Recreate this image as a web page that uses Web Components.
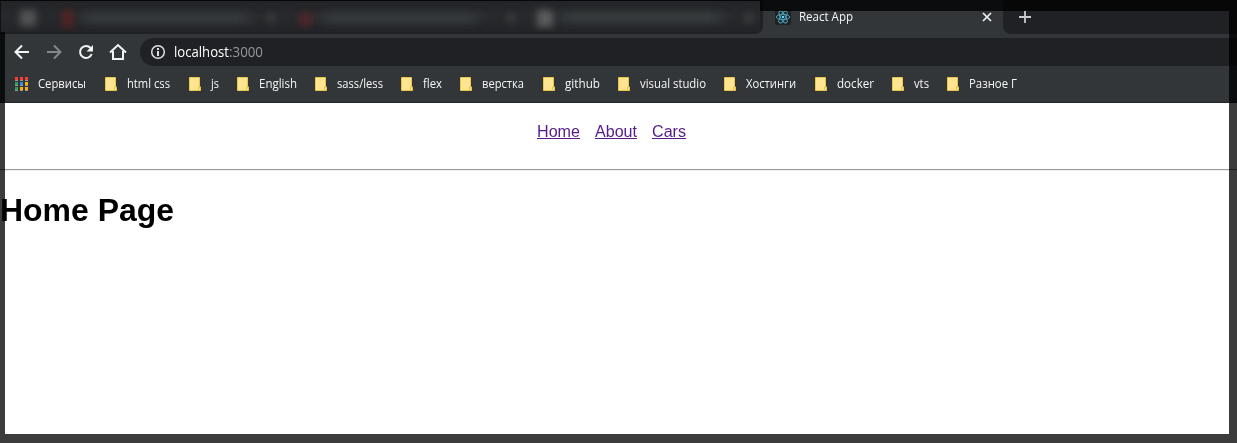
<!DOCTYPE html>
<html lang="ru"><head><meta charset="utf-8"><title>React App</title>
<style>html,body{margin:0;height:100%;overflow:hidden;background:#fff}</style></head><body>
<browser-window></browser-window>
<script>
class BaseEl extends HTMLElement{
  constructor(){super();this.attachShadow({mode:'open'});}
  draw(css,html){this.shadowRoot.innerHTML='<style>'+css+'</style>'+html;}
}
customElements.define('fit-text',class extends BaseEl{
  connectedCallback(){
    this.draw(':host{display:block;white-space:pre;flex:none;width:'+this.getAttribute('w')+'px}span{display:inline-block;transform-origin:0 50%}','<span><slot></slot></span>');
    const s=this.shadowRoot.querySelector('span');
    const w=s.getBoundingClientRect().width;
    s.style.transform='scaleX('+(+this.getAttribute('w')/w)+')';
  }
});
customElements.define('blurred-tabs',class extends BaseEl{
  connectedCallback(){
    this.draw(`:host{display:block;width:760px;height:31px;background:linear-gradient(#232427,#27292c 50%,#232427);overflow:hidden;border-left:1px solid #111;box-sizing:border-box}
    svg{display:block}`,
    `<svg width="759" height="31"><defs><filter id="b" x="-100%" y="-100%" width="300%" height="300%"><feGaussianBlur stdDeviation="3.5"/></filter><filter id="c" x="-50%" y="-200%" width="200%" height="500%"><feGaussianBlur stdDeviation="7 4.5"/></filter></defs>
    <g filter="url(#c)" fill="#3b4043"><rect x="82" y="13" width="166" height="8"/><rect x="322" y="13" width="155" height="8"/><rect x="560" y="12" width="160" height="9"/></g>
    <g filter="url(#b)"><rect x="19" y="9" width="16" height="16" fill="#515253"/><rect x="62" y="9" width="10" height="17" fill="#592420"/><rect x="298" y="12" width="14" height="12" fill="#4d272a"/><rect x="536" y="9" width="16" height="17" fill="#5a5b5c"/>
    <g fill="#3c3f41"><rect x="266" y="13" width="8" height="8"/><rect x="506" y="13" width="8" height="8"/><rect x="744" y="13" width="8" height="8"/></g></g></svg>`);
  }
});
customElements.define('tab-strip',class extends BaseEl{
  connectedCallback(){
    this.draw(`:host{display:flex;height:34px;background:#202124;color:#f5f6f7;font:12px/16px "Open Sans","Noto Sans",sans-serif}
    .before{width:763px;background:#202124;border-radius:0 0 8px 0}
    .wrap{background:#323639;display:flex;width:1003px}
    .tab{display:flex;flex:1;align-items:center;padding-left:12px}
    .tab svg{display:block}.tab fit-text{margin-left:8px}.close{margin-left:129px}
    .after{flex:1;background:#202124;border-radius:0 0 0 8px;padding:10px 0 0 15px}
    .under{flex:1;background:#323639;display:flex}`,
    `<div class="wrap"><div class="before"></div><div class="tab">
    <svg width="16" height="16"><rect width="16" height="16" rx="2" fill="#202124"/><g fill="none" stroke="#4fa9c0" stroke-width=".9"><ellipse cx="8" cy="8" rx="6.700" ry="2.600"/><ellipse cx="8" cy="8" rx="6.700" ry="2.600" transform="rotate(60 8 8)"/><ellipse cx="8" cy="8" rx="6.700" ry="2.600" transform="rotate(120 8 8)"/></g><circle cx="8" cy="8" r="1.300" fill="#61dafb"/></svg>
    <fit-text w="54">React App</fit-text><svg class="close" width="10" height="10"><path d="M1 1l8 8M9 1l-8 8" stroke="#f1f3f4" stroke-width="1.700"/></svg></div></div>
    <div class="under"><div class="after"><svg width="14" height="14"><path d="M7 1v12M1 7h12" stroke="#c8cacb" stroke-width="1.800"/></svg></div></div>`);
  }
});
customElements.define('tool-bar',class extends BaseEl{
  connectedCallback(){
    this.draw(`:host{display:flex;height:32px;padding-top:4px;box-sizing:border-box;background:#323639}
    .nav{display:flex;width:140px;box-sizing:border-box;padding-left:12px;gap:12px;align-items:center;height:28px}
    svg{display:block;flex:none}.addr{flex:1;height:28px;border-radius:14px 0 0 14px;background:#202124;display:flex;align-items:center;padding-left:10px;font:14px/20px "Open Sans","Noto Sans",sans-serif;color:#fff}
    .addr svg{margin-right:8px}.port{color:#92979c}`,
    `<div class="nav"><svg width="20" height="20" fill="none" stroke="#f1f3f4" stroke-width="2"><path d="M17 10H4M10 3.500L3.500 10l6.500 6.500"/></svg>
    <svg width="20" height="20" fill="none" stroke="#85888a" stroke-width="2"><path d="M3 10h13M10 3.500l6.500 6.500-6.500 6.500"/></svg>
    <svg width="20" height="20" fill="none" stroke="#f1f3f4" stroke-width="2"><path d="M14.600 6A6 6 0 1 0 15.700 12"/><path d="M17 3v6.500h-6.500z" fill="#f1f3f4" stroke="none"/></svg>
    <svg width="20" height="20" fill="none" stroke="#f1f3f4" stroke-width="2"><path d="M2 10.500L10 3l8 7.500M5 9v8h10V9"/></svg></div>
    <div class="addr"><svg width="16" height="16"><circle cx="8" cy="8" r="6.300" fill="none" stroke="#e0e1e2" stroke-width="1.500"/><path d="M8 7v5M8 4v2" stroke="#f1f3f4" stroke-width="1.800"/></svg><fit-text w="55">localhost</fit-text><fit-text class="port" w="34">:3000</fit-text></div>`);
  }
});
customElements.define('bookmark-item',class extends BaseEl{
  connectedCallback(){
    this.draw(`:host{display:flex;align-items:center;flex:none;width:${this.getAttribute('span')}px}svg{display:block;margin-right:10px}`,
    `<svg width="12" height="14"><path d="M.500.500h10V10h1v3.500H.500z" fill="#ffe592" stroke="#e9c447"/><path d="M9.500 13v-3h2" fill="none" stroke="#e9c447"/></svg><fit-text w="${this.getAttribute('w')}">${this.textContent}</fit-text>`);
  }
});
customElements.define('bookmark-bar',class extends BaseEl{
  connectedCallback(){
    const items=[['html css',43,84],['js',8,48],['English',38,78],['sass/less',46,86],['flex',19,59],['верстка',42,83],['github',35,75],['visual studio',66,106],['Хостинги',50,91],['docker',37,77],['vts',15,55],['Разное Г',48,80]];
    const cols=['#fb3a3a','#fb3a3a','#fb3a3a','#2fa055','#2a8cff','#fbb005','#2fa055','#fbb005','#fbb005'];
    this.draw(`:host{display:flex;height:37px;box-sizing:border-box;padding:0 0 1px 15px;background:#323639;border-bottom:1px solid #202427;align-items:center;color:#f5f6f7;font:12px/16px "Open Sans","Noto Sans",sans-serif}
    .apps{display:flex;align-items:center;width:90px}svg{margin-right:10px}`,
    `<div class="apps"><svg width="13" height="14">${cols.map((c,i)=>`<rect x="${i%3*5}" y="${(i/3|0)*5}" width="3" height="3" fill="${c}"/><rect x="${i%3*5}" y="${(i/3|0)*5+3}" width="3" height="1" fill="#9b9995"/>`).join('')}</svg><fit-text w="48">Сервисы</fit-text></div>`+
    items.map(i=>`<bookmark-item w="${i[1]}" span="${i[2]}">${i[0]}</bookmark-item>`).join(''));
  }
});
customElements.define('home-page',class extends BaseEl{
  connectedCallback(){
    this.draw(`:host{display:block;font:16px/18px "Liberation Sans",Arial,sans-serif;color:#000}
    nav{display:flex;justify-content:center;gap:15px;height:66px;box-sizing:border-box;padding:20px 14px 0 0}
    nav fit-text{color:#551a8b}
    hr{margin:0;border:0;height:1px;background:#9a9a9a;border-bottom:1px solid #eee}h1{font-size:32px;line-height:37px;margin:21px 0 0}`,
    `<nav><fit-text w="43"><u>Home</u></fit-text><fit-text w="42"><u>About</u></fit-text><fit-text w="34"><u>Cars</u></fit-text></nav><hr><h1><fit-text w="174">Home Page</fit-text></h1>`);
  }
});
customElements.define('browser-window',class extends BaseEl{
  connectedCallback(){
    this.draw(`:host{display:block;position:relative;width:1237px;height:443px;background:#fff;overflow:hidden}
    .shade{position:absolute;inset:0;border:solid rgba(0,0,0,.765);border-width:11px 8px 9px 5px}
    blurred-tabs{position:absolute;left:0;top:1px}`,
    `<tab-strip></tab-strip><tool-bar></tool-bar><bookmark-bar></bookmark-bar><home-page></home-page><div class="shade"></div><blurred-tabs></blurred-tabs>`);
  }
});
</script></body></html>
